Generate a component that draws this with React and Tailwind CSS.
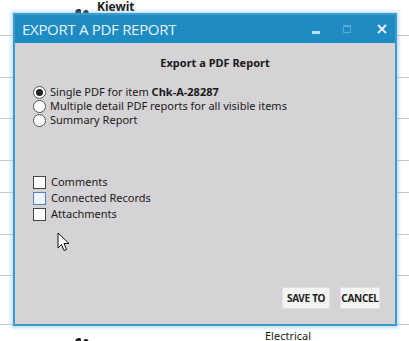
import React from 'react';

const rows = [36, 42, 41, 42, 32, 42, 41, 49];

const Radio = ({ checked, children }) => (
  <label className="flex items-center gap-[4px] h-[14px]">
    <span className="w-[13px] h-[13px] rounded-full border border-[#555] bg-white flex items-center justify-center shrink-0">
      {checked && <span className="w-[7px] h-[7px] rounded-full bg-[#222]" />}
    </span>
    <span>{children}</span>
  </label>
);

const Check = ({ hover, children }) => (
  <label className="flex items-center gap-[5px] h-[16px]">
    <span className={`w-[13px] h-[13px] border shrink-0 ${hover ? 'border-[#5a7fc0] bg-[#eef3fb]' : 'border-[#444] bg-white'}`} />
    <span>{children}</span>
  </label>
);

export default function App() {
  return (
    <div className="relative w-[409px] h-[341px] bg-white overflow-hidden font-['Noto_Sans',sans-serif] text-[#1a1a1a]">
      {/* background grid rows */}
      <div className="flex flex-col">
        {rows.map((h, i) => (
          <div key={i} style={{ height: h }} className="border-b border-[#c8c8c8]" />
        ))}
      </div>

      <div className="absolute left-[75px] top-[1px] flex items-center gap-[8px] text-[12px] font-bold leading-[12px]">
        <svg width="14" height="6" viewBox="0 0 14 6" className="mt-[6px]">
          <path d="M0 6 L1 3 L3 2 L5 2 L6 3 L6 6 Z" fill="#222" />
          <path d="M8 6 L9 4 L10 3 L12 3 L13 4 L14 6 Z" fill="#222" />
        </svg>
        <span>Kiewit</span>
      </div>
      <div className="absolute left-[265px] top-[329px] text-[11px] leading-[13px]">Electrical</div>
      <svg className="absolute left-[75px] top-[336px]" width="14" height="6" viewBox="0 0 14 6">
        <path d="M0 6 L1 3 L3 2 L5 2 L6 3 L6 6 Z" fill="#222" />
        <path d="M8 6 L9 4 L10 3 L12 3 L13 4 L14 6 Z" fill="#222" />
      </svg>

      {/* dialog */}
      <div className="absolute left-[13px] top-[13px] w-[384px] h-[313px] border-2 border-[#3d9bd3] shadow-[0_0_3px_2px_rgba(120,190,240,0.45)] flex flex-col">
        <div className="h-[28px] bg-[#1e8bc3] flex items-center pl-[7px] pr-[8px] shrink-0">
          <span className="text-[15px] text-[#e8f3fa] font-['Open_Sans',sans-serif] leading-none tracking-[-0.3px]">EXPORT A PDF REPORT</span>
          <div className="ml-auto flex items-center">
            <span className="w-[8px] h-[3px] bg-[#b9dcf0] mt-[6px]" />
            <span className="ml-[23px] w-[8px] h-[8px] border border-[#5fa8d6] border-t-2" />
            <svg className="ml-[26px]" width="10" height="10" viewBox="0 0 10 10">
              <path d="M1 1 L9 9 M9 1 L1 9" stroke="#e3f1fa" strokeWidth="2" />
            </svg>
          </div>
        </div>
        <div className="flex-1 bg-[#d5d3d6] flex flex-col text-[11px] leading-[14px] px-[18px]">
          <div className="text-center font-bold mt-[13px] pl-[20px]">Export a PDF Report</div>
          <div className="mt-[15px] flex flex-col">
            <Radio checked>
              Single PDF for item <b>Chk-A-28287</b>
            </Radio>
            <Radio>Multiple detail PDF reports for all visible items</Radio>
            <Radio>Summary Report</Radio>
          </div>
          <div className="mt-[47px] flex flex-col">
            <Check>Comments</Check>
            <Check hover>Connected Records</Check>
            <Check>Attachments</Check>
          </div>
          <div className="mt-[10px] ml-[24px]">
            <svg width="13" height="20" viewBox="0 0 13 20">
              <path d="M1 1 L1 16 L4.5 12.5 L7 18.5 L9.5 17.5 L7 11.5 L12 11.5 Z" fill="#fff" stroke="#111" strokeWidth="1" strokeLinejoin="round" />
            </svg>
          </div>
          <div className="mt-auto mb-[15px] flex justify-end gap-[10px] -mr-[3px]">
            <button className="w-[48px] h-[22px] bg-[#f4f4f4] border border-[#e0e0e0] text-[10px] font-bold text-[#222] leading-none tracking-[-0.3px]">SAVE TO</button>
            <button className="w-[40px] h-[22px] bg-[#f4f4f4] border border-[#e0e0e0] text-[10px] font-bold text-[#222] leading-none tracking-[-0.3px]">CANCEL</button>
          </div>
        </div>
      </div>
    </div>
  );
}
